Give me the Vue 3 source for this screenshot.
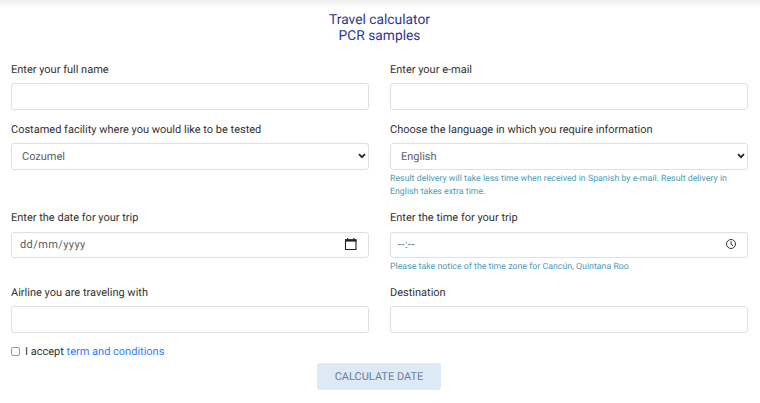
<template>
  <div class="page">
    <div class="top-shade"></div>
    <h1 class="title">Travel calculator<br />PCR samples</h1>
    <form class="form" @submit.prevent>
      <div class="field">
        <label>Enter your full name</label>
        <input class="control" type="text" />
      </div>
      <div class="field">
        <label>Enter your e-mail</label>
        <input class="control" type="text" />
      </div>

      <div class="field">
        <label>Costamed facility where you would like to be tested</label>
        <div class="control-wrap">
          <select class="control select">
            <option>Cozumel</option>
          </select>
          <svg class="chevron" width="8" height="6" viewBox="0 0 8 6">
            <path d="M1 1.2 4 4.2 7 1.2" fill="none" stroke="#222" stroke-width="1.7" />
          </svg>
        </div>
      </div>
      <div class="field">
        <label>Choose the language in which you require information</label>
        <div class="control-wrap">
          <select class="control select">
            <option>English</option>
          </select>
          <svg class="chevron" width="8" height="6" viewBox="0 0 8 6">
            <path d="M1 1.2 4 4.2 7 1.2" fill="none" stroke="#222" stroke-width="1.7" />
          </svg>
        </div>
        <p class="hint">Result delivery will take less time when received in Spanish by e-mail. Result delivery in English takes extra time.</p>
      </div>

      <div class="field">
        <label>Enter the date for your trip</label>
        <div class="control-wrap">
          <input class="control stamp" type="text" placeholder="dd/mm/yyyy" />
          <svg class="side-icon calendar" width="14" height="14" viewBox="0 0 14 14">
            <path d="M1.5 3h10.5v9.5h-10.5z" fill="none" stroke="#222" stroke-width="1.1" />
            <path d="M1 2.2h11.5v2.4h-11.5z" fill="#222" />
            <path d="M3.6 1v1.5M9.9 1v1.5" stroke="#222" stroke-width="1.1" />
          </svg>
        </div>
      </div>
      <div class="field">
        <label>Enter the time for your trip</label>
        <div class="control-wrap">
          <input class="control stamp time" type="text" placeholder="--:--" />
          <svg class="side-icon clock" width="12" height="12" viewBox="0 0 12 12">
            <circle cx="6" cy="6" r="4.5" fill="none" stroke="#333" stroke-width="1" />
            <path d="M6 3.2V6.2L8 7.8" fill="none" stroke="#333" stroke-width="1" />
          </svg>
        </div>
        <p class="hint">Please take notice of the time zone for Cancún, Quintana Roo</p>
      </div>

      <div class="field">
        <label>Airline you are traveling with</label>
        <input class="control" type="text" />
      </div>
      <div class="field">
        <label>Destination</label>
        <input class="control" type="text" />
      </div>
    </form>

    <div class="accept">
      <input class="check" type="checkbox" />
      <span>I accept <a href="#" @click.prevent>term and conditions</a></span>
    </div>
    <div class="actions">
      <button class="submit" type="button">CALCULATE DATE</button>
    </div>
  </div>
</template>

<script setup>
</script>

<style>
html, body {
  margin: 0;
  background: #fff;
}
</style>

<style scoped>
.page {
  position: relative;
  width: 760px;
  height: 403px;
  overflow: hidden;
  padding-top: 12px;
  box-sizing: border-box;
  background: #fff;
  font-family: Roboto, "Liberation Sans", sans-serif;
  color: #333;
  text-rendering: geometricPrecision;
}

.top-shade {
  position: absolute;
  top: 0;
  left: 0;
  right: 0;
  height: 9px;
  background: linear-gradient(180deg, #efefef, #fff);
}

.title {
  margin: 0;
  padding-right: 1px;
  font-size: 13.8px;
  font-weight: 400;
  line-height: 16px;
  text-align: center;
  color: #2a3a8c;
}

.form {
  display: grid;
  grid-template-columns: 358px 358px;
  column-gap: 21px;
  padding: 17.8px 0 0 11px;
}

.field {
  display: flex;
  flex-direction: column;
  padding-bottom: 12px;
}

.field label {
  height: 21.5px;
  font-size: 11px;
  line-height: 15px;
}

.control-wrap {
  position: relative;
}

.control {
  display: block;
  width: 100%;
  height: 26.5px;
  box-sizing: border-box;
  border: 1px solid #dcdfe3;
  border-radius: 3px;
  background: #fff;
  font-family: inherit;
  font-size: 11px;
  color: #5a6168;
  outline: none;
  text-rendering: geometricPrecision;
}

.select {
  appearance: none;
  padding: 0 10px;
}

.stamp {
  padding: 0 8px;
  letter-spacing: 0.4px;
}

.stamp::placeholder {
  color: #5a6168;
  opacity: 1;
}

.time {
  padding-left: 7px;
}

.chevron {
  position: absolute;
  top: 10px;
  right: 3px;
}

.side-icon {
  position: absolute;
}

.calendar {
  top: 5px;
  right: 11px;
}

.clock {
  top: 6px;
  right: 11px;
}

.hint {
  margin: 3px 0 -1.4px;
  font-size: 8.8px;
  line-height: 13.3px;
  color: #4a9db8;
}

.accept {
  display: flex;
  align-items: center;
  gap: 5px;
  margin-top: -1px;
  padding-left: 11px;
  font-size: 11px;
  line-height: 16px;
}

.accept a {
  color: #2a7ffd;
  text-decoration: none;
}

.check {
  appearance: none;
  width: 9px;
  height: 9px;
  margin: 0;
  border: 1px solid #9a9a9a;
  border-radius: 2px;
  background: #fff;
}

.actions {
  display: flex;
  justify-content: center;
  margin-top: 3.5px;
  padding-right: 2px;
}

.submit {
  width: 124px;
  height: 26.5px;
  border: 0;
  border-radius: 3px;
  background: #dde9f4;
  font-family: inherit;
  font-size: 11px;
  color: #6b7fa6;
  text-rendering: geometricPrecision;
}
</style>
